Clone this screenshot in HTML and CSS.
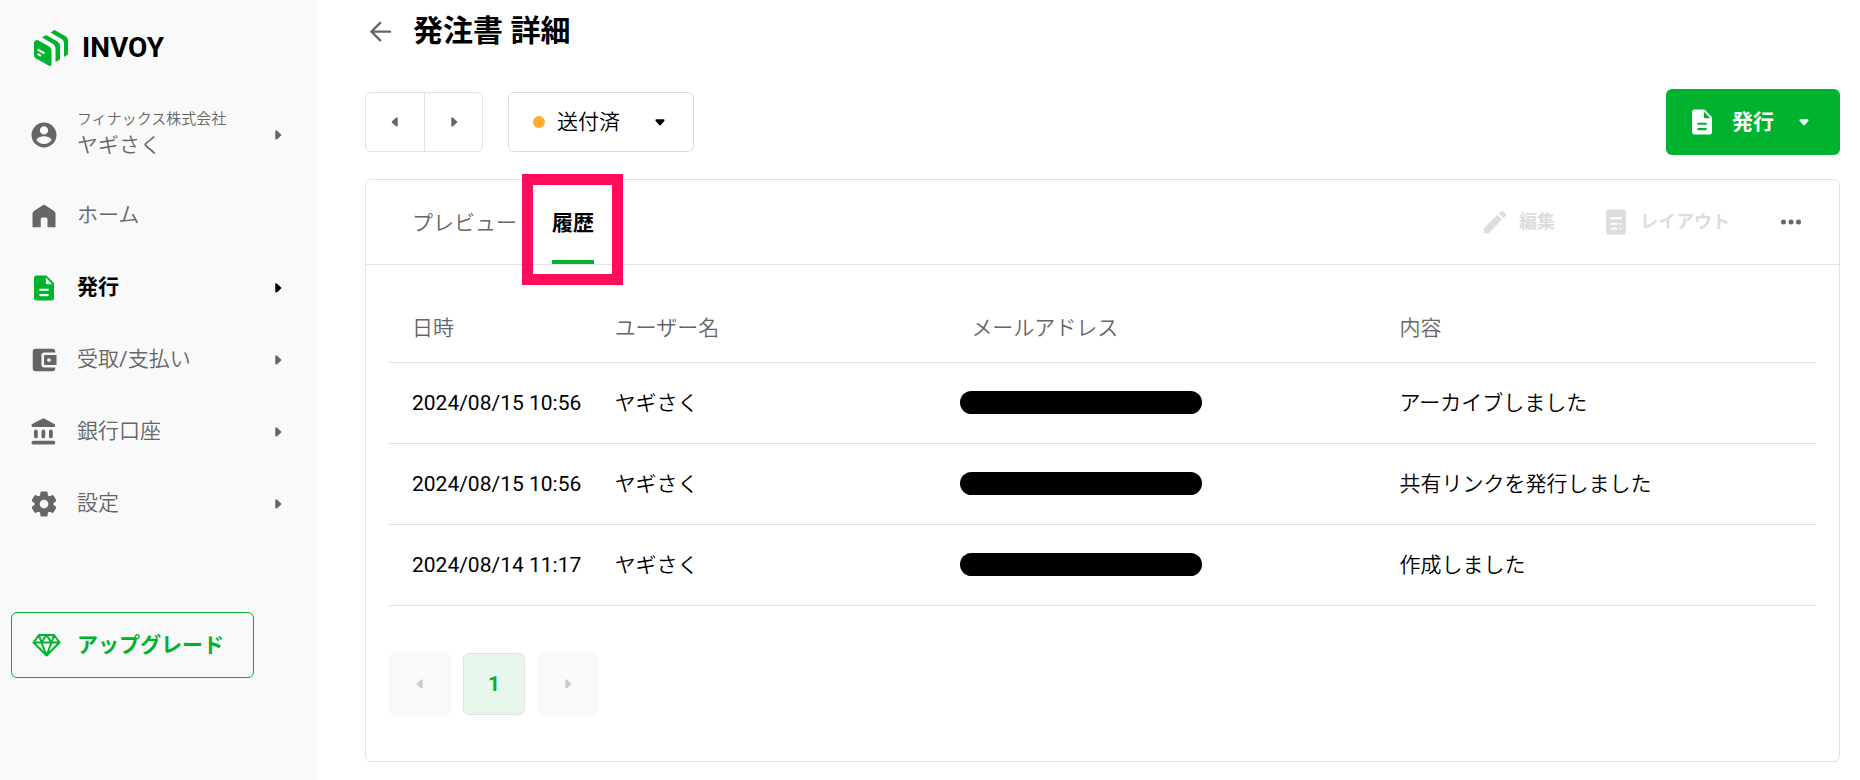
FILE: index.html
```html
<!DOCTYPE html>
<html lang="ja">
<head>
<meta charset="utf-8">
<meta name="viewport" content="width=device-width, initial-scale=1">
<title>発注書 詳細 - INVOY</title>
<link rel="stylesheet" href="styles.css">
</head>
<body>
<svg class="sprite" aria-hidden="true">
  <symbol id="caret-right" viewBox="0 0 24 24"><path d="M9 8.200v7.600q0 1.200 1 1.200l1-.3 4.200-3.800q1-.9 0-1.800l-4.200-3.800q-2-1.100-2 .9z"/></symbol>
  <symbol id="caret-left" viewBox="0 0 24 24"><path d="M15 8.200v7.600q0 1.200-1 1.200l-1-.3-4.200-3.800q-1-.9 0-1.800l4.200-3.800q2-1.100 2 .9z"/></symbol>
  <symbol id="caret-down" viewBox="0 0 24 24"><path d="M8.200 9h7.600q1.200 0 1.200 1l-.3 1-3.800 4.200q-.9 1-1.800 0l-3.800-4.200q-1.100-2 .9-2z"/></symbol>
  <symbol id="doc" viewBox="0 0 24 24"><path d="M6 2a2 2 0 0 0-2 2v16c0 1.100.9 2 2 2h12a2 2 0 0 0 2-2V8.800a2 2 0 0 0-.6-1.400l-4.800-4.800A2 2 0 0 0 13.200 2zm9 16.500H9a.8.8 0 0 1 0-1.700h6a.8.8 0 0 1 0 1.700zm0-4.300H9a.8.8 0 0 1 0-1.700h6a.8.8 0 0 1 0 1.700zM13.500 8V3.500L18.500 9H14.500a1 1 0 0 1-1-1z"/></symbol>
</svg>
<div class="app">
  <aside class="sidebar">
    <a class="brand" href="#">
      <svg class="brand-mark" viewBox="0 0 34 36" aria-hidden="true">
        <path d="M2 10.200Q3 9.800 4 10.300L15 16.500q2.500 1.500 2.500 4V34q0 2.500-2.500 1.700L2 28.500Q0 27.300 0 25.500V12z"/>
        <path d="M8 7.500 12 5l11.500 6.500q2.500 1.500 2.500 4.500V29.500L21.500 32V18.500q0-3-2.300-4.500z"/>
        <path d="M16.500 2.500 20.500 0 32 6.500q2 1.200 2 4V24.500L30 27V13q0-2.300-2-3.700z"/>
        <path class="brand-line" d="m3.500 19.500 7 3.800M3.500 23.800l3.500 2"/>
      </svg>
      <span class="brand-name">INVOY</span>
    </a>
    <nav class="menu">
      <a class="item account" href="#">
        <svg class="icon" viewBox="0 0 24 24"><path d="M12 2a10 10 0 1 0 0 20 10 10 0 0 0 0-20zm0 3a3.300 3.300 0 1 1 0 6.600A3.300 3.300 0 0 1 12 5zm0 14.200a7.200 7.200 0 0 1-6-3.200c0-2 4-3.100 6-3.100s6 1.100 6 3.100a7.200 7.200 0 0 1-6 3.200z"/></svg>
        <span class="label"><span class="company">フィナックス株式会社</span><span class="name">ヤギさく</span></span>
        <svg class="caret"><use href="#caret-right"/></svg>
      </a>
      <a class="item" href="#">
        <svg class="icon" viewBox="0 0 24 24"><path d="M11 3.300q1-.6 2 0l7 4.700q1.200.8 1.200 2V21h-6.400v-6.500q0-1.300-1.300-1.300h-2.800q-1.300 0-1.300 1.300V21H2.800V10q0-1.200 1.200-2z"/></svg>
        <span class="label">ホーム</span>
      </a>
      <a class="item active" href="#" aria-current="page">
        <svg class="icon"><use href="#doc"/></svg>
        <span class="label">発行</span>
        <svg class="caret"><use href="#caret-right"/></svg>
      </a>
      <a class="item" href="#">
        <svg class="icon" viewBox="0 0 24 24"><path d="M10 16V8c0-1.100.89-2 2-2h9V5c0-1.100-.9-2-2-2H5c-1.110 0-2 .9-2 2v14c0 1.100.89 2 2 2h14c1.100 0 2-.9 2-2v-1h-9c-1.110 0-2-.9-2-2zm3-8c-.55 0-1 .45-1 1v6c0 .55.45 1 1 1h9V8h-9zm3 5.500c-.83 0-1.500-.67-1.500-1.500s.67-1.500 1.500-1.500 1.500.67 1.500 1.500-.67 1.500-1.500 1.500z"/></svg>
        <span class="label">受取/支払い</span>
        <svg class="caret"><use href="#caret-right"/></svg>
      </a>
      <a class="item" href="#">
        <svg class="icon" viewBox="0 0 24 24"><path d="M4 11.500v4a1.500 1.500 0 0 0 3 0v-4a1.500 1.500 0 0 0-3 0zm6 0v4a1.500 1.500 0 0 0 3 0v-4a1.500 1.500 0 0 0-3 0zM3.500 22h16a1.500 1.500 0 0 0 0-3h-16a1.500 1.500 0 0 0 0 3zM16 11.500v4a1.500 1.500 0 0 0 3 0v-4a1.500 1.500 0 0 0-3 0zM10.570 1.490l-7.900 4.160c-.41.21-.67.640-.67 1.100C2 7.440 2.560 8 3.250 8h16.510C20.440 8 21 7.440 21 6.750c0-.46-.26-.89-.67-1.100l-7.900-4.160c-.58-.31-1.280-.31-1.860 0z"/></svg>
        <span class="label">銀行口座</span>
        <svg class="caret"><use href="#caret-right"/></svg>
      </a>
      <a class="item" href="#">
        <svg class="icon" viewBox="0 0 24 24"><path d="M19.500 12c0-.23-.01-.45-.03-.68l1.860-1.410c.4-.3.51-.86.26-1.300l-1.870-3.230a.987.987 0 0 0-1.250-.42l-2.150.91c-.37-.26-.76-.49-1.170-.68l-.29-2.310c-.06-.5-.49-.88-.99-.88h-3.730c-.51 0-.94.38-1 .88l-.29 2.310c-.41.19-.8.42-1.170.68l-2.150-.91c-.46-.2-1-.02-1.250.42L2.410 8.620c-.25.44-.14.99.26 1.300l1.860 1.410a7.343 7.343 0 0 0 0 1.350l-1.860 1.410c-.4.3-.51.86-.26 1.300l1.870 3.230c.25.44.79.62 1.250.42l2.150-.91c.37.26.76.49 1.170.68l.29 2.310c.06.5.49.88.99.88h3.730c.5 0 .93-.38.99-.88l.29-2.310c.41-.19.8-.42 1.170-.68l2.150.91c.46.2 1 .02 1.250-.42l1.870-3.230c.25-.44.14-.99-.26-1.300l-1.860-1.410c.03-.23.04-.45.04-.68zm-7.460 3.500c-1.930 0-3.500-1.570-3.500-3.500s1.570-3.500 3.500-3.500 3.500 1.570 3.500 3.500-1.570 3.500-3.500 3.500z"/></svg>
        <span class="label">設定</span>
        <svg class="caret"><use href="#caret-right"/></svg>
      </a>
    </nav>
    <button class="upgrade" type="button">
      <svg class="gem" viewBox="0 0 28 24" aria-hidden="true"><path d="M6.500 2h15L27 9.500 14 22.500 1 9.500zM1 9.500h26M9 9.500l5 13 5-13M6.500 2 9 9.500 14 2l5 7.500L21.500 2"/></svg>
      アップグレード
    </button>
  </aside>

  <main class="main">
    <header class="heading">
      <a class="back" href="#" aria-label="戻る"><svg viewBox="0 0 24 24"><path d="M21.500 12.500H6M13 5l-7.500 7.500L13 20"/></svg></a>
      <h1>発注書 詳細</h1>
    </header>
    <div class="toolbar">
      <div class="pager">
        <button type="button" aria-label="前へ"><svg class="caret"><use href="#caret-left"/></svg></button>
        <button type="button" aria-label="次へ"><svg class="caret"><use href="#caret-right"/></svg></button>
      </div>
      <button class="status" type="button" aria-haspopup="listbox">
        <span class="dot"></span>送付済
        <svg class="caret"><use href="#caret-down"/></svg>
      </button>
      <button class="issue" type="button" aria-haspopup="menu">
        <svg class="icon"><use href="#doc"/></svg>発行
        <svg class="caret"><use href="#caret-down"/></svg>
      </button>
    </div>

    <section class="card">
      <div class="card-head">
        <div class="tabs" role="tablist">
          <button class="tab" type="button" role="tab" aria-selected="false">プレビュー</button>
          <button class="tab selected" type="button" role="tab" aria-selected="true">履歴</button>
        </div>
        <div class="actions">
          <button class="action" type="button" disabled>
            <svg class="icon" viewBox="0 0 24 24"><path d="M3 17.500V20c0 .6.400 1 1 1h2.500q.4 0 .7-.3L17.800 10 14 6.200 3.300 16.800q-.3.3-.3.700zM20.700 7q.7-.7 0-1.400l-2.300-2.300q-.7-.7-1.400 0l-1.900 1.900L18.900 9z"/></svg>
            編集
          </button>
          <button class="action" type="button" disabled>
            <svg class="icon" viewBox="0 0 24 24"><path fill-rule="evenodd" d="M6 2h12a2 2 0 0 1 2 2v16a2 2 0 0 1-2 2H6a2 2 0 0 1-2-2V4a2 2 0 0 1 2-2zm2 6a.8.8 0 0 0 0 1.700h8a.8.8 0 0 0 0-1.700zm0 4.700a.8.8 0 0 0 0 1.500h5.300v-1.500zm6.800 0v1.500H16a.8.8 0 0 0 0-1.500zM8 16.500a.8.8 0 0 0 0 1.500h5.300v-1.500zm6.800 0V18H16a.8.8 0 0 0 0-1.500z"/></svg>
            レイアウト
          </button>
          <button class="more" type="button" aria-label="その他"><svg class="icon" viewBox="0 0 24 24"><circle cx="6" cy="12" r="2"/><circle cx="12" cy="12" r="2"/><circle cx="18" cy="12" r="2"/></svg></button>
        </div>
      </div>
      <div class="card-body">
        <table class="history">
          <thead>
            <tr><th class="col-date">日時</th><th class="col-user">ユーザー名</th><th class="col-mail">メールアドレス</th><th>内容</th></tr>
          </thead>
          <tbody>
            <tr><td>2024/08/15 10:56</td><td>ヤギさく</td><td class="masked"><span class="mask"></span></td><td>アーカイブしました</td></tr>
            <tr><td>2024/08/15 10:56</td><td>ヤギさく</td><td class="masked"><span class="mask"></span></td><td>共有リンクを発行しました</td></tr>
            <tr><td>2024/08/14 11:17</td><td>ヤギさく</td><td class="masked"><span class="mask"></span></td><td>作成しました</td></tr>
          </tbody>
        </table>
        <nav class="pages" aria-label="ページ">
          <button type="button" disabled aria-label="前のページ"><svg class="caret"><use href="#caret-left"/></svg></button>
          <button class="current" type="button" aria-current="page">1</button>
          <button type="button" disabled aria-label="次のページ"><svg class="caret"><use href="#caret-right"/></svg></button>
        </nav>
      </div>
    </section>
  </main>
</div>
</body>
</html>
```
FILE: styles.css
```css
:root {
  --green: #00b22d;
  --gray: #666;
  --line: #e2e2e2;
}

* { box-sizing: border-box; }

body {
  margin: 0;
  background: #fff;
  color: #000;
  font: 21px/30px Roboto, "Noto Sans CJK JP DemiLight", "Noto Sans CJK JP", sans-serif;
}

button {
  margin: 0;
  padding: 0;
  border: 0;
  background: none;
  color: inherit;
  font: inherit;
  cursor: pointer;
}

a { color: inherit; text-decoration: none; }

svg { display: block; flex: none; fill: currentColor; }

h1, .active, .upgrade, .issue, .action, .tab.selected, .pages .current {
  font-family: Roboto, "Noto Sans CJK JP", sans-serif;
  font-weight: bold;
}

.sprite { display: none; }
.icon { width: 30px; height: 30px; }
.caret { width: 22px; height: 22px; }

.app { display: flex; min-height: 100vh; }

/* Sidebar */
.sidebar {
  flex: none;
  width: 317px;
  background: #f9f9f9;
  color: var(--gray);
}

.brand {
  display: flex;
  align-items: center;
  gap: 14px;
  padding: 30px 0 0 34px;
  color: #000;
}
.brand-mark { width: 34px; height: 36px; fill: var(--green); }
.brand-line { fill: none; stroke: #f9f9f9; stroke-width: 2; }
.brand-name { font: bold 28px/36px Roboto, sans-serif; }

.menu { padding-top: 30px; }
.item {
  display: flex;
  align-items: center;
  height: 72px;
  padding: 0 28px 0 29px;
}
.item .label { flex: 1; margin-left: 18px; padding-bottom: 3px; }
.account { height: 78px; margin-bottom: 6px; }
.account .label { display: flex; flex-direction: column; }
.company { font-size: 15px; line-height: 22px; }
.active { color: #000; }
.active .icon { color: var(--green); }

.upgrade {
  display: flex;
  align-items: center;
  gap: 16px;
  width: 243px;
  height: 66px;
  margin: 72px 0 0 11px;
  padding-left: 20px;
  border: 1px solid var(--green);
  border-radius: 6px;
  color: var(--green);
}
.gem { width: 29px; height: 24px; fill: none; stroke: currentColor; stroke-width: 2; stroke-linejoin: round; }

/* Main */
.main { flex: 1; min-width: 0; padding: 9px 20px 18px 48px; }

.heading { display: flex; align-items: center; gap: 20px; }
.back { color: var(--gray); }
.back svg { width: 28px; height: 28px; fill: none; stroke: currentColor; stroke-width: 2; stroke-linecap: round; stroke-linejoin: round; }
h1 { margin: 0; font-size: 30px; line-height: 44px; }

.toolbar { display: flex; align-items: center; gap: 25px; margin: 36px 0 24px; }
.pager { display: flex; border: 1px solid var(--line); border-radius: 6px; color: var(--gray); }
.pager button { display: grid; place-items: center; width: 58px; height: 58px; }
.pager button + button { border-left: 1px solid var(--line); }

.status {
  display: flex;
  align-items: center;
  gap: 12px;
  width: 186px;
  height: 60px;
  padding: 0 22px 0 24px;
  border: 1px solid #ddd;
  border-radius: 6px;
}
.dot { width: 12px; height: 12px; border-radius: 50%; background: #ffad2b; }
.status .caret, .issue .caret { margin-left: auto; }

.issue {
  display: flex;
  align-items: center;
  gap: 15px;
  width: 174px;
  height: 66px;
  margin-left: auto;
  padding: 0 25px 0 21px;
  border-radius: 6px;
  background: var(--green);
  color: #fff;
}

.card { border: 1px solid var(--line); border-radius: 6px; }
.card-head {
  display: flex;
  justify-content: space-between;
  height: 85px;
  padding: 0 33px 0 46px;
  border-bottom: 1px solid var(--line);
}
.tabs { display: flex; gap: 35px; }
.tab { position: relative; padding-top: 6px; border-bottom: 4px solid transparent; color: var(--gray); }
.tab.selected { border-color: var(--green); color: #000; }
.tab.selected::after {
  content: "";
  position: absolute;
  inset: -6px -29px -25px -30px;
  border: 11px solid #ff0d5b;
}

.actions { display: flex; align-items: center; gap: 46px; }
.action { display: flex; align-items: center; gap: 9px; color: #ddd; font-size: 18px; }
.more { color: var(--gray); }

.card-body { padding: 29px 23px 46px; }
.history { width: 100%; border-collapse: collapse; table-layout: fixed; }
.history th, .history td {
  height: 81px;
  padding: 0 0 0 23px;
  border-bottom: 1px solid var(--line);
  text-align: left;
}
.history th { height: 68px; color: var(--gray); font-weight: normal; }
.history .masked { padding-left: 12px; }
.col-date { width: 14.2%; }
.col-user { width: 25%; }
.col-mail { width: 30%; }
.mask { display: block; width: 242px; height: 23px; border-radius: 12px; background: #000; }

.pages { display: flex; gap: 12px; margin-top: 47px; }
.pages button {
  display: grid;
  place-items: center;
  width: 62px;
  height: 62px;
  border: 1px solid #f7f7f7;
  border-radius: 6px;
  background: #f9f9f9;
  color: #ccc;
}
.pages .current { border-color: var(--line); background: #e8f7ec; color: var(--green); }
```
